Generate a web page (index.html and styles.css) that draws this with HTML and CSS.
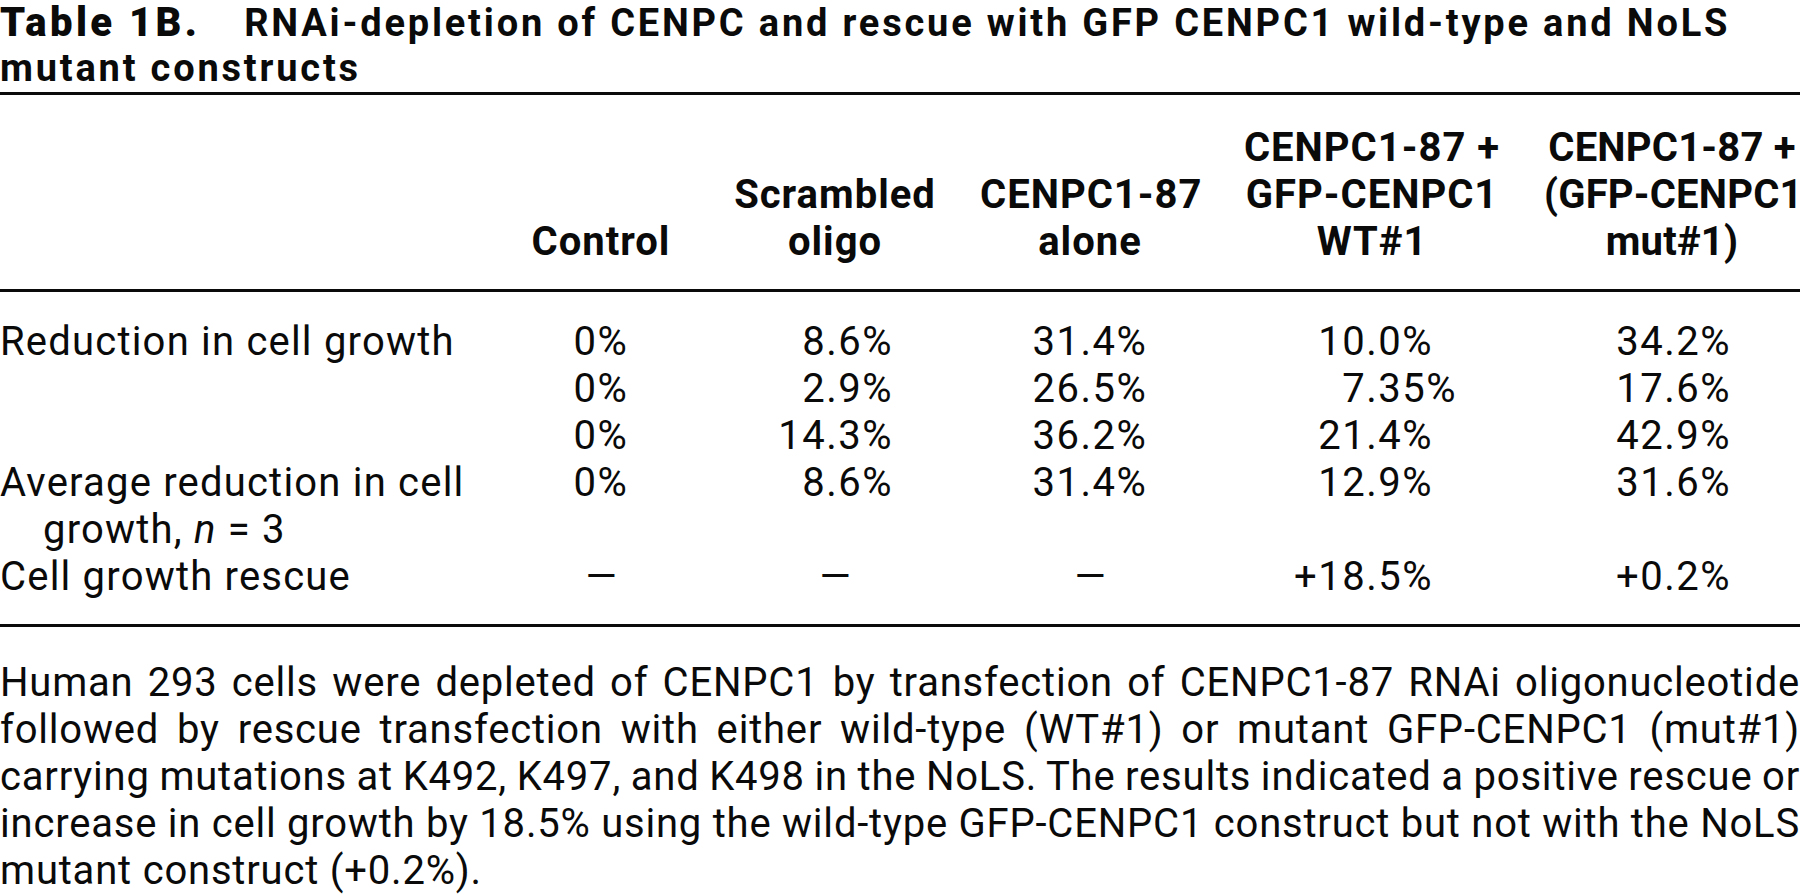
FILE: index.html
```html
<!DOCTYPE html>
<html lang="en">
<head>
<meta charset="utf-8">
<title>Table 1B</title>
<link rel="stylesheet" href="styles.css">
</head>
<body>
<div class="page">
  <h1 class="title">
    <span class="tline"><span class="label">Table 1B.</span>RNAi-depletion of CENPC and rescue with GFP CENPC1 wild-type and NoLS</span>
    <span class="tline">mutant constructs</span>
  </h1>
  <div class="table">
    <div class="grid thead">
      <div class="th"></div>
      <div class="th">Control</div>
      <div class="th">Scrambled<br>oligo</div>
      <div class="th">CENPC1-87<br>alone</div>
      <div class="th">CENPC1-87 +<br>GFP-CENPC1<br>WT#1</div>
      <div class="th edge">CENPC1-87 +<br>(GFP-CENPC1<br>mut#1)</div>
    </div>
    <div class="grid tbody">
      <div class="rl">Reduction in cell growth</div>
      <div class="num c1">0%</div>
      <div class="num c2">8.6%</div>
      <div class="num c3">31.4%</div>
      <div class="num c4">10.0%</div>
      <div class="num c5">34.2%</div>

      <div class="rl"></div>
      <div class="num c1">0%</div>
      <div class="num c2">2.9%</div>
      <div class="num c3">26.5%</div>
      <div class="num c4"><span class="dec">7.35%</span></div>
      <div class="num c5">17.6%</div>

      <div class="rl"></div>
      <div class="num c1">0%</div>
      <div class="num c2">14.3%</div>
      <div class="num c3">36.2%</div>
      <div class="num c4">21.4%</div>
      <div class="num c5">42.9%</div>

      <div class="rl">Average reduction in cell<br>growth, <i>n</i> = 3</div>
      <div class="num c1">0%</div>
      <div class="num c2">8.6%</div>
      <div class="num c3">31.4%</div>
      <div class="num c4">12.9%</div>
      <div class="num c5">31.6%</div>

      <div class="rl">Cell growth rescue</div>
      <div class="num c1 dash">—</div>
      <div class="num c2 dash">—</div>
      <div class="num c3 dash">—</div>
      <div class="num c4">+18.5%</div>
      <div class="num c5">+0.2%</div>
    </div>
  </div>
  <div class="caption">
    <span class="line">Human 293 cells were depleted of CENPC1 by transfection of CENPC1-87 RNAi oligonucleotide</span>
    <span class="line">followed by rescue transfection with either wild-type (WT#1) or mutant GFP-CENPC1 (mut#1)</span>
    <span class="line">carrying mutations at K492, K497, and K498 in the NoLS. The results indicated a positive rescue or</span>
    <span class="line">increase in cell growth by 18.5% using the wild-type GFP-CENPC1 construct but not with the NoLS</span>
    <span class="line last">mutant construct (+0.2%).</span>
  </div>
</div>
</body>
</html>
```

FILE: styles.css
```css
html, body {
  margin: 0;
  padding: 0;
  background: #ffffff;
}

.page {
  width: 1800px;
  font-family: Roboto, "Liberation Sans", sans-serif;
  font-size: 40px;
  color: #0a0a0a;
}

.title {
  margin: 0 0 1px 0;
  font-size: 38px;
  line-height: 45px;
  font-weight: 700;
  letter-spacing: 2.8px;
}

.tline {
  display: block;
  white-space: nowrap;
}

.title .label {
  font-size: 40px;
  font-weight: 900;
  letter-spacing: 3.4px;
  margin-right: 44px;
}

.table {
  border-top: 3px solid #0a0a0a;
  border-bottom: 3px solid #0a0a0a;
}

.grid {
  display: grid;
  grid-template-columns: 1fr 178px 204px 220px 258px 256px;
  column-gap: 43px;
}

.thead {
  padding: 28.85px 0 24.15px 0;
  border-bottom: 3px solid #0a0a0a;
  align-items: end;
  line-height: 47px;
  font-weight: 700;
  letter-spacing: 1px;
}

.th {
  text-align: center;
  white-space: nowrap;
}

.th.edge {
  letter-spacing: 0.2px;
}

.tbody {
  padding: 26.35px 0 23.65px 0;
  line-height: 47px;
  align-items: start;
  letter-spacing: 1.2px;
}

.rl {
  padding-left: 43px;
  text-indent: -43px;
  white-space: nowrap;
}

.num {
  letter-spacing: 1.5px;
}

.c1, .c3 {
  text-align: center;
}

.c2 {
  text-align: right;
  padding-right: 44px;
}

.dash {
  letter-spacing: 0;
}

.c2.dash {
  text-align: center;
  padding-right: 0;
}

.c4 {
  text-align: right;
  padding-right: 68px;
}

.c4 .dec {
  margin-right: -24px;
}

.c5 {
  text-align: right;
  padding-right: 69px;
}

.caption {
  margin-top: 31.85px;
  line-height: 47px;
}

.caption .line {
  display: block;
  white-space: nowrap;
  letter-spacing: 0.8px;
  word-spacing: -3px;
  text-align: justify;
  text-align-last: justify;
}

.caption .line.last {
  text-align: left;
  text-align-last: left;
  word-spacing: 0;
}
```
